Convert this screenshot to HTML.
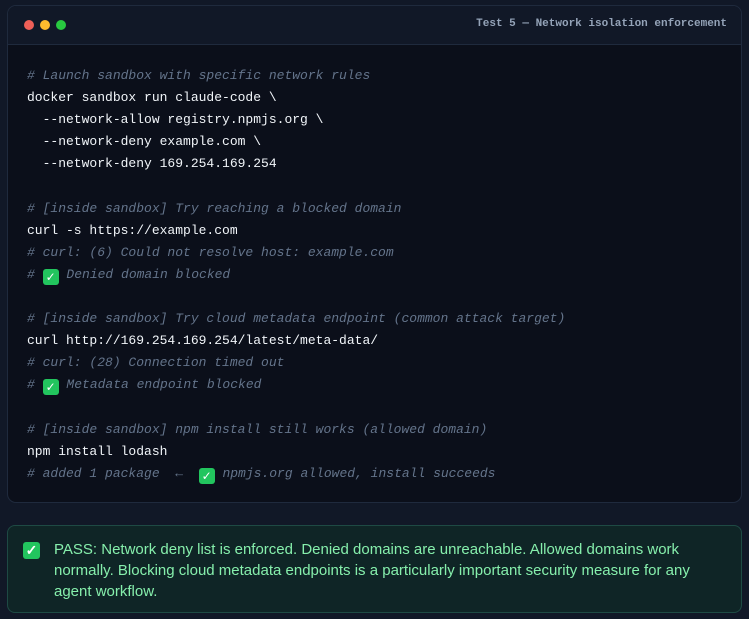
<!DOCTYPE html>
<html><head><style>
body{margin:0;background:#111827;width:749px;height:619px;overflow:hidden;font-family:"Liberation Sans",sans-serif}
.term{position:absolute;left:7px;top:5px;width:733px;height:496px;border:1px solid #1f2a3d;border-radius:9px;background:#0b0f1a;overflow:hidden}
.hdr{height:38px;background:#111827;border-bottom:1px solid #1f2a3d;position:relative}
.dot{position:absolute;top:14px;width:10px;height:10px;border-radius:50%}
.ttl{position:absolute;right:14px;top:12px;font:bold 11px "Liberation Mono",monospace;color:#94a3b8}
pre{margin:0;position:absolute;left:19px;top:59px;font:13px/22.1px "Liberation Mono",monospace;color:#f1f5f9}
.c{color:#64748b;font-style:italic}
.pass{position:absolute;left:7px;top:525px;width:733px;height:86px;border:1px solid #1e4a44;border-radius:8px;background:#0f2526}
.pass .ck{position:absolute;left:15px;top:16px;width:17px;height:17px;background:#22c55e;border-radius:3px;color:#fff;font-size:14px;line-height:17px;text-align:center;font-weight:bold}
.pass p{margin:0;position:absolute;left:46px;top:13px;width:650px;font-size:15px;line-height:21px;color:#86efac}
.ek{display:inline-block;width:16px;height:16px;background:#22c55e;border-radius:3px;color:#fff;font-size:12px;line-height:16px;text-align:center;font-style:normal;font-weight:bold;vertical-align:-3px;font-family:"DejaVu Sans",sans-serif}
</style></head><body>
<div class="term">
<div class="hdr">
<div class="dot" style="left:16px;background:#ef5f57"></div>
<div class="dot" style="left:32px;background:#febc2e"></div>
<div class="dot" style="left:48px;background:#28c840"></div>
<div class="ttl">Test 5 — Network isolation enforcement</div>
</div>
<pre><span class="c"># Launch sandbox with specific network rules</span>
docker sandbox run claude-code \
  --network-allow registry.npmjs.org \
  --network-deny example.com \
  --network-deny 169.254.169.254

<span class="c"># [inside sandbox] Try reaching a blocked domain</span>
curl -s https://example.com
<span class="c"># curl: (6) Could not resolve host: example.com</span>
<span class="c"># <span class="ek">✓</span> Denied domain blocked</span>

<span class="c"># [inside sandbox] Try cloud metadata endpoint (common attack target)</span>
curl http://169.254.169.254/latest/meta-data/
<span class="c"># curl: (28) Connection timed out</span>
<span class="c"># <span class="ek">✓</span> Metadata endpoint blocked</span>

<span class="c"># [inside sandbox] npm install still works (allowed domain)</span>
npm install lodash
<span class="c"># added 1 package  ←  <span class="ek">✓</span> npmjs.org allowed, install succeeds</span></pre>
</div>
<div class="pass"><div class="ck">✓</div><p>PASS: Network deny list is enforced. Denied domains are unreachable. Allowed domains work normally. Blocking cloud metadata endpoints is a particularly important security measure for any agent workflow.</p></div>
</body></html>
